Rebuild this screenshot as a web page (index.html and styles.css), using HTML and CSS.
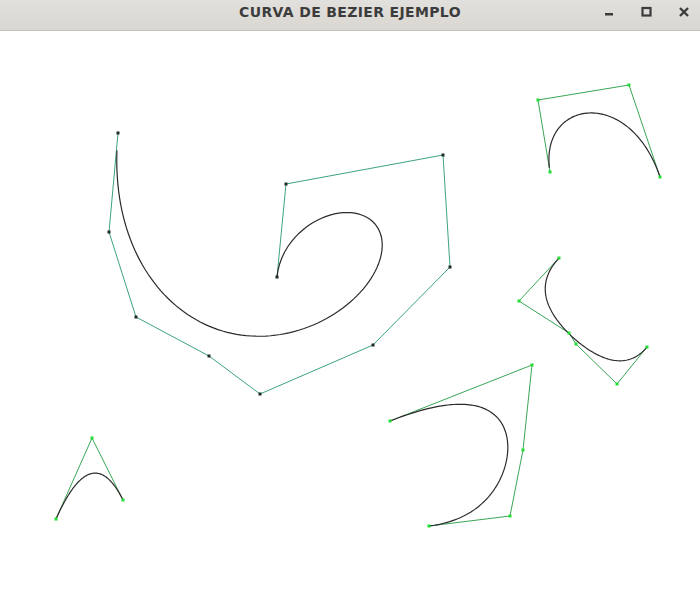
FILE: index.html
```html
<!DOCTYPE html>
<html lang="es">
<head>
<meta charset="utf-8">
<title>CURVA DE BEZIER EJEMPLO</title>
<link rel="stylesheet" href="styles.css">
</head>
<body>
<div class="window">
  <header class="titlebar">
    <div class="spacer"></div>
    <div class="title">CURVA DE BEZIER EJEMPLO</div>
    <div class="controls">
      <svg class="ctl-icons" width="100" height="30" viewBox="0 0 100 30">
        <rect x="5" y="13" width="8" height="2.5"/>
        <rect x="42.5" y="8" width="8" height="7.5" fill="none" stroke-width="2.2"/>
        <path d="M80 8 L88 16 M88 8 L80 16" fill="none" stroke-width="2.4"/>
      </svg>
    </div>
  </header>
  <svg class="canvas" width="700" height="581" viewBox="0 31 700 581">
    <!-- big curve -->
    <polyline class="poly poly-teal" points="118,133 109,232 136,317 209,356 260,394 373,345 450,267 443,155 286,184 277,277"/>
    <path class="curve" data-t0="0.02" data-pts="118,133 109,232 136,317 209,356 260,394 373,345 450,267 443,155 286,184 277,277"/>
    <g class="pts pts-dark">
      <rect x="116.5" y="131.5" width="3" height="3"/>
      <rect x="107.5" y="230.5" width="3" height="3"/>
      <rect x="134.5" y="315.5" width="3" height="3"/>
      <rect x="207.5" y="354.5" width="3" height="3"/>
      <rect x="258.5" y="392.5" width="3" height="3"/>
      <rect x="371.5" y="343.5" width="3" height="3"/>
      <rect x="448.5" y="265.5" width="3" height="3"/>
      <rect x="441.5" y="153.5" width="3" height="3"/>
      <rect x="284.5" y="182.5" width="3" height="3"/>
      <rect x="275.5" y="275.5" width="3" height="3"/>
    </g>

    <!-- top right -->
    <polyline class="poly poly-green" points="550,172 538,100 629,85 660,177"/>
    <path class="curve" data-t0="0.02" data-pts="550,172 538,100 629,85 660,177"/>
    <g class="pts pts-green">
      <rect x="548.5" y="170.5" width="3" height="3"/>
      <rect x="536.5" y="98.5" width="3" height="3"/>
      <rect x="627.5" y="83.5" width="3" height="3"/>
      <rect x="658.5" y="175.5" width="3" height="3"/>
    </g>

    <!-- right middle -->
    <polyline class="poly poly-green" points="559,258 519,301 569,333 576,344 617,384 647,347"/>
    <path class="curve" data-t0="0" data-pts="559,258 519,301 569,333 576,344 617,384 647,347"/>
    <g class="pts pts-green">
      <rect x="557.5" y="256.5" width="3" height="3"/>
      <rect x="517.5" y="299.5" width="3" height="3"/>
      <rect x="567.5" y="331.5" width="3" height="3"/>
      <rect x="574.5" y="342.5" width="3" height="3"/>
      <rect x="615.5" y="382.5" width="3" height="3"/>
      <rect x="645.5" y="345.5" width="3" height="3"/>
    </g>

    <!-- bottom middle -->
    <polyline class="poly poly-green" points="390,421 532,365 523,450 510,516 429,526"/>
    <path class="curve" data-t0="0" data-pts="390,421 532,365 523,450 510,516 429,526"/>
    <g class="pts pts-green">
      <rect x="388.5" y="419.5" width="3" height="3"/>
      <rect x="530.5" y="363.5" width="3" height="3"/>
      <rect x="521.5" y="448.5" width="3" height="3"/>
      <rect x="508.5" y="514.5" width="3" height="3"/>
      <rect x="427.5" y="524.5" width="3" height="3"/>
    </g>

    <!-- bottom left -->
    <polyline class="poly poly-green" points="56,519 92,438 123,500"/>
    <path class="curve" data-t0="0" data-pts="56,519 92,438 123,500"/>
    <g class="pts pts-green">
      <rect x="54.5" y="517.5" width="3" height="3"/>
      <rect x="90.5" y="436.5" width="3" height="3"/>
      <rect x="121.5" y="498.5" width="3" height="3"/>
    </g>
  </svg>
</div>
<script src="script.js"></script>
</body>
</html>
```

FILE: styles.css
```css
html, body {
  margin: 0;
  padding: 0;
  background: #ffffff;
}

.window {
  width: 700px;
  height: 612px;
  display: flex;
  flex-direction: column;
  background: #ffffff;
  overflow: hidden;
}

.titlebar {
  height: 30px;
  flex: 0 0 30px;
  display: grid;
  grid-template-columns: 1fr auto 1fr;
  align-items: start;
  background: linear-gradient(#e2e0dc, #dad7d2);
  border-bottom: 1px solid #c4c1bb;
  color: #3c3c3c;
}

.title {
  font-family: "DejaVu Sans", "Open Sans", sans-serif;
  font-weight: 700;
  font-size: 14px;
  letter-spacing: 0.35px;
  line-height: 16px;
  padding-top: 4px;
  white-space: nowrap;
}

.controls {
  display: flex;
  justify-content: flex-end;
  height: 30px;
}

.ctl-icons {
  display: block;
  fill: #3c3c3c;
  stroke: #3c3c3c;
}

.ctl-icons rect:first-child {
  stroke: none;
}

.canvas {
  display: block;
  flex: 0 0 auto;
  background: #ffffff;
}

.poly {
  fill: none;
  stroke-width: 1;
  stroke-linejoin: miter;
}

.poly-teal {
  stroke: #3da37f;
}

.poly-green {
  stroke: #3aa657;
}

.curve {
  fill: none;
  stroke: #2b2b2b;
  stroke-width: 1.2;
}

.pts-dark {
  fill: #1e2a24;
}

.pts-green {
  fill: #22dd33;
}
```

FILE: script.js
```js
(function () {
  var paths = document.querySelectorAll('path.curve');
  paths.forEach(function (p) {
    var pts = p.getAttribute('data-pts').trim().split(/\s+/).map(function (s) {
      return s.split(',').map(Number);
    });
    var t0 = parseFloat(p.getAttribute('data-t0') || '0');
    var steps = 120, d = '';
    for (var i = 0; i <= steps; i++) {
      var t = t0 + (1 - t0) * i / steps;
      var q = pts.map(function (a) { return [a[0], a[1]]; });
      for (var k = q.length - 1; k > 0; k--) {
        for (var j = 0; j < k; j++) {
          q[j][0] = q[j][0] * (1 - t) + q[j + 1][0] * t;
          q[j][1] = q[j][1] * (1 - t) + q[j + 1][1] * t;
        }
      }
      d += (i === 0 ? 'M' : 'L') + q[0][0].toFixed(2) + ' ' + q[0][1].toFixed(2) + ' ';
    }
    p.setAttribute('d', d);
  });
})();
```
